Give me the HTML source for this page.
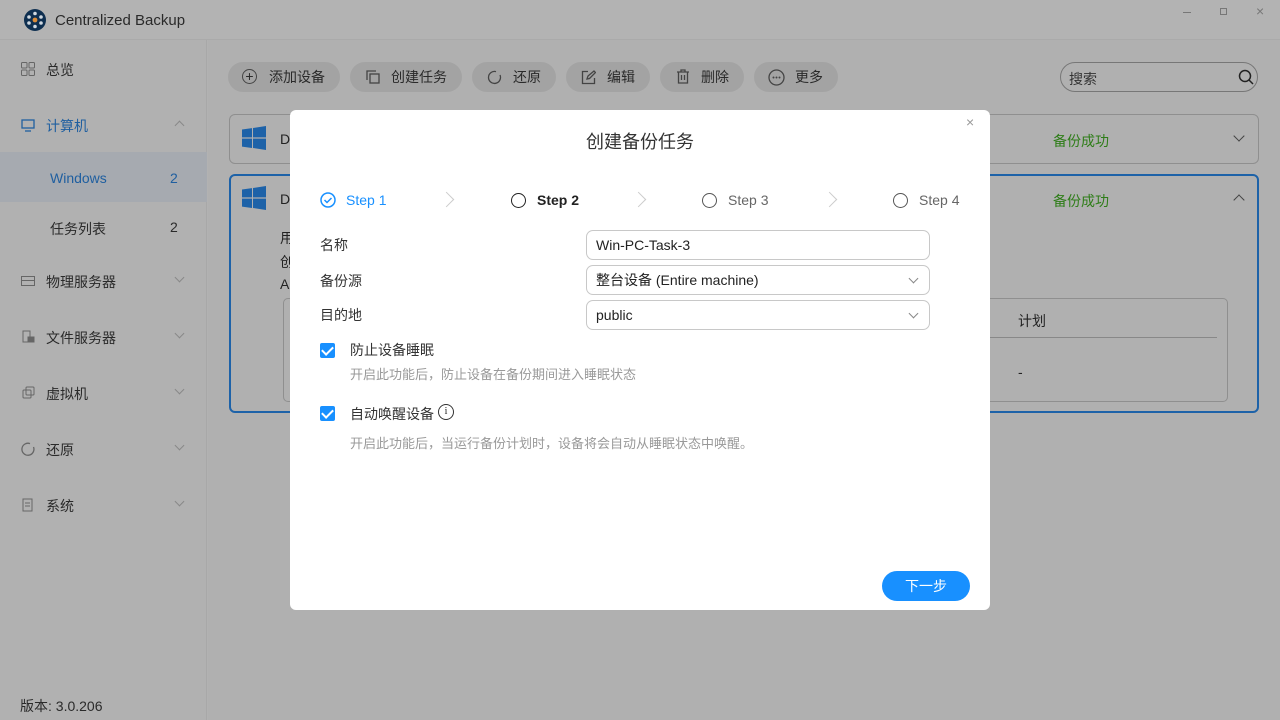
<!DOCTYPE html>
<html><head><meta charset="utf-8"><style>
*{box-sizing:border-box;margin:0;padding:0}
body{width:1280px;height:720px;overflow:hidden;background:#b2b2b2;font-family:"Liberation Sans","Noto Sans CJK SC",sans-serif;color:#222;position:relative;font-size:14px}
.abs{position:absolute}
.title{left:0;top:0;width:1280px;height:40px;background:#b3b3b3;border-bottom:1px solid #aaa}
.side{left:0;top:40px;width:207px;height:680px;background:#b1b1b1;border-right:1px solid #a8a8a8}
.main{left:208px;top:40px;width:1072px;height:680px;background:#b0b0b0}
.nav{position:absolute;left:20px;font-size:14px;color:#2a2a2a}
.chev{position:absolute;left:176px;width:7px;height:7px;border-right:1px solid #888;border-bottom:1px solid #888;transform:rotate(45deg)}
.btn{position:absolute;top:62px;height:30px;border-radius:15px;background:#a3a3a3;font-size:14px;line-height:30px;color:#2a2a2a}
.card{position:absolute;left:229px;width:1030px;border:1px solid #8f8f8f;border-radius:6px}
.win{position:absolute;width:24px;height:24px}
.green{position:absolute;left:1053px;color:#2e7d18;font-size:14px}
.modal{left:290px;top:110px;width:700px;height:500px;background:#fff;border-radius:6px}
.lab{position:absolute;left:30px;font-size:14px;color:#333}
.inp{position:absolute;left:296px;width:344px;height:30px;border:1px solid #c8c8c8;border-radius:7px;padding-left:9px;line-height:28px;font-size:14px;color:#222}
.dd{position:absolute;right:12px;top:9px;width:7px;height:7px;border-right:1px solid #888;border-bottom:1px solid #888;transform:rotate(45deg)}
.cb{position:absolute;left:30px;width:15px;height:15px;background:#1890ff;border-radius:2px}
.cb:after{content:"";position:absolute;left:4px;top:1px;width:5px;height:9px;border-right:2px solid #fff;border-bottom:2px solid #fff;transform:rotate(45deg)}
.desc{position:absolute;left:60px;font-size:13px;color:#999}
.sarr{position:absolute;top:84px;width:11px;height:11px;border-right:1px solid #ccc;border-top:1px solid #ccc;transform:rotate(45deg)}
</style></head><body>
<div class="abs title"></div>
<svg class="abs" style="left:24px;top:9px" width="22" height="22" viewBox="0 0 22 22"><circle cx="11" cy="11" r="11" fill="#0e2f50"/><g fill="#cfd8e0"><circle cx="11" cy="4.5" r="1.8"/><circle cx="11" cy="17.5" r="1.8"/><circle cx="5" cy="8" r="1.8"/><circle cx="17" cy="8" r="1.8"/><circle cx="5" cy="14" r="1.8"/><circle cx="17" cy="14" r="1.8"/></g><circle cx="11" cy="11" r="2.4" fill="#d98c3a"/></svg>
<div class="abs" style="left:55px;top:12px;font-size:15px;color:#2a2a2a">Centralized Backup</div>
<div class="abs" style="left:1183px;top:12px;width:8px;border-top:1px solid #777"></div>
<div class="abs" style="left:1220px;top:8px;width:7px;height:7px;border:1px solid #777"></div>
<div class="abs" style="left:1256px;top:3px;font-size:14px;color:#777">×</div>
<div class="abs side"></div>
<div class="abs main"></div>
<svg class="abs" style="left:21px;top:62px" width="14" height="14" viewBox="0 0 14 14" fill="none" stroke="#666"><rect x=".5" y=".5" width="5.5" height="5.5" rx="1"/><rect x="8" y=".5" width="5.5" height="5.5" rx="1"/><rect x=".5" y="8" width="5.5" height="5.5" rx="1"/><rect x="8" y="8" width="5.5" height="5.5" rx="1"/></svg>
<div class="nav" style="left:46px;top:60px">总览</div>
<svg class="abs" style="left:21px;top:119px" width="14" height="13" viewBox="0 0 14 13" fill="none" stroke="#2060a0" stroke-width="1.3"><rect x="1" y="1" width="12" height="8"/><path d="M4 12h6"/></svg>
<div class="nav" style="left:46px;top:116px;color:#1f5fa0">计算机</div>
<div class="chev" style="top:122px;transform:rotate(225deg)"></div>
<div class="abs" style="left:0;top:152px;width:207px;height:50px;background:#a6aab0"></div>
<div class="nav" style="left:50px;top:170px;color:#1f5fa0">Windows</div>
<div class="nav" style="left:170px;top:170px;color:#1f5fa0">2</div>
<div class="nav" style="left:50px;top:219px">任务列表</div>
<div class="nav" style="left:170px;top:219px">2</div>
<svg class="abs" style="left:21px;top:276px" width="14" height="10"><rect x=".5" y=".5" width="13" height="9" fill="none" stroke="#666"/><rect x="1" y="4" width="12" height="1" fill="#666"/></svg>
<div class="nav" style="left:46px;top:272px">物理服务器</div><div class="chev" style="top:274px"></div>
<svg class="abs" style="left:22px;top:330px" width="13" height="13" fill="none" stroke="#666"><path d="M1 1h7v11H1z"/><rect x="6" y="7" width="6" height="5" fill="#666"/></svg>
<div class="nav" style="left:46px;top:328px">文件服务器</div><div class="chev" style="top:330px"></div>
<svg class="abs" style="left:22px;top:386px" width="13" height="13" fill="none" stroke="#666"><rect x="4" y="1" width="8" height="8" rx="1"/><rect x="1" y="4" width="8" height="8" rx="1"/></svg>
<div class="nav" style="left:46px;top:384px">虚拟机</div><div class="chev" style="top:386px"></div>
<svg class="abs" style="left:21px;top:442px" width="14" height="14" fill="none" stroke="#666" stroke-width="1.3"><path d="M9 1.6A6 6 0 1 0 12.5 5"/></svg>
<div class="nav" style="left:46px;top:440px">还原</div><div class="chev" style="top:442px"></div>
<svg class="abs" style="left:22px;top:498px" width="13" height="14" fill="none" stroke="#666"><path d="M1 1h9v12H1z M3 5h5 M3 8h5"/></svg>
<div class="nav" style="left:46px;top:496px">系统</div><div class="chev" style="top:498px"></div>
<div class="abs" style="left:20px;top:696px;font-size:14px;color:#2a2a2a">版本: 3.0.206</div>
<div class="btn" style="left:228px;width:112px"><span style="position:absolute;left:14px;top:7px;width:15px;height:15px;border:1.3px solid #444;border-radius:50%;text-align:center;line-height:12px;font-size:14px">+</span><span style="position:absolute;left:41px">添加设备</span></div>
<div class="btn" style="left:350px;width:112px"><svg style="position:absolute;left:16px;top:8px" width="14" height="14" fill="none" stroke="#444" stroke-width="1.3"><path d="M1 10V1h9"/><rect x="4" y="4" width="9" height="9"/></svg><span style="position:absolute;left:41px">创建任务</span></div>
<div class="btn" style="left:472px;width:84px"><svg style="position:absolute;left:15px;top:8px" width="15" height="15" fill="none" stroke="#444" stroke-width="1.3"><path d="M9 1.6A6 6 0 1 0 13 5"/></svg><span style="position:absolute;left:41px">还原</span></div>
<div class="btn" style="left:566px;width:84px"><svg style="position:absolute;left:15px;top:8px" width="15" height="15" fill="none" stroke="#444" stroke-width="1.3"><path d="M7 1.5H1.5v12h12V8 M6 9l1-3 6-5 1.5 1.5-6 6z"/></svg><span style="position:absolute;left:41px">编辑</span></div>
<div class="btn" style="left:660px;width:84px"><svg style="position:absolute;left:16px;top:7px" width="14" height="15" fill="none" stroke="#444" stroke-width="1.3"><path d="M1 3h12 M5 3V1h4v2 M2.5 3v11h9V3 M5.5 6v5 M8.5 6v5"/></svg><span style="position:absolute;left:41px">删除</span></div>
<div class="btn" style="left:754px;width:84px"><svg style="position:absolute;left:14px;top:7px" width="17" height="17" fill="none" stroke="#444" stroke-width="1.3"><circle cx="8.5" cy="8.5" r="7.5"/><g fill="#444" stroke="none"><circle cx="5.5" cy="8.5" r="1"/><circle cx="8.5" cy="8.5" r="1"/><circle cx="11.5" cy="8.5" r="1"/></g></svg><span style="position:absolute;left:41px">更多</span></div>
<div class="abs" style="left:1060px;top:62px;width:198px;height:30px;border:1px solid #777;border-radius:15px"><span style="position:absolute;left:8px;top:6px;color:#333">搜索</span><svg style="position:absolute;left:177px;top:6px" width="16" height="16" fill="none" stroke="#222" stroke-width="1.5"><circle cx="7" cy="7" r="5.5"/><path d="M11 11l4 4"/></svg></div>
<div class="card" style="top:114px;height:50px"></div>
<div class="card" style="top:174px;height:239px;border:2px solid #1d62a8"></div>
<svg class="win" style="left:242px;top:126px" viewBox="0 0 24 24" fill="#1d62a8"><path d="M0 3.5l10-1.4V11.4H0z M11 2l13-2v11.4H11z M0 12.6h10v9.4L0 20.6z M11 12.6h13V24l-13-2z"/></svg>
<svg class="win" style="left:242px;top:186px" viewBox="0 0 24 24" fill="#1d62a8"><path d="M0 3.5l10-1.4V11.4H0z M11 2l13-2v11.4H11z M0 12.6h10v9.4L0 20.6z M11 12.6h13V24l-13-2z"/></svg>
<div class="abs" style="left:280px;top:131px">D</div><div class="abs" style="left:280px;top:191px">D</div>
<div class="abs" style="left:280px;top:228px">用</div><div class="abs" style="left:280px;top:252px">创</div><div class="abs" style="left:280px;top:276px">A</div>
<div class="green" style="top:131px">备份成功</div><div class="green" style="top:191px">备份成功</div>
<div class="abs" style="left:1235px;top:132px;width:8px;height:8px;border-right:1px solid #444;border-bottom:1px solid #444;transform:rotate(45deg)"></div>
<div class="abs" style="left:1235px;top:196px;width:8px;height:8px;border-left:1px solid #444;border-top:1px solid #444;transform:rotate(45deg)"></div>
<div class="abs" style="left:283px;top:298px;width:945px;height:104px;border:1px solid #8f8f8f;border-radius:5px"></div>
<div class="abs" style="left:990px;top:337px;width:227px;border-top:1px solid #888"></div>
<div class="abs" style="left:1018px;top:311px">计划</div>
<div class="abs" style="left:1018px;top:364px">-</div>
<div class="abs modal">
<div class="abs" style="left:0;top:18px;width:700px;text-align:center;font-size:18px;color:#333">创建备份任务</div>
<div class="abs" style="left:676px;top:4px;color:#999;font-size:14px">×</div>
<svg class="abs" style="left:30px;top:82px" width="16" height="16" fill="none" stroke="#1890ff" stroke-width="1.5"><circle cx="8" cy="8" r="7"/><path d="M4.5 8l2.5 2.5 4.5-4.5"/></svg>
<div class="abs" style="left:56px;top:82px;color:#1890ff">Step 1</div>
<div class="sarr" style="left:151px"></div>
<div class="abs" style="left:221px;top:83px;width:15px;height:15px;border:1.8px solid #222;border-radius:50%"></div>
<div class="abs" style="left:247px;top:82px;font-weight:bold;color:#222">Step 2</div>
<div class="sarr" style="left:343px"></div>
<div class="abs" style="left:412px;top:83px;width:15px;height:15px;border:1.5px solid #555;border-radius:50%"></div>
<div class="abs" style="left:438px;top:82px;color:#666">Step 3</div>
<div class="sarr" style="left:534px"></div>
<div class="abs" style="left:603px;top:83px;width:15px;height:15px;border:1.5px solid #555;border-radius:50%"></div>
<div class="abs" style="left:629px;top:82px;color:#666">Step 4</div>
<div class="lab" style="top:125px">名称</div>
<div class="lab" style="top:161px">备份源</div>
<div class="lab" style="top:195px">目的地</div>
<div class="inp" style="top:120px">Win-PC-Task-3</div>
<div class="inp" style="top:155px">整台设备 (Entire machine)<div class="dd"></div></div>
<div class="inp" style="top:190px">public<div class="dd"></div></div>
<div class="cb" style="top:233px"></div>
<div class="abs" style="left:60px;top:230px;color:#333">防止设备睡眠</div>
<div class="desc" style="top:254px">开启此功能后，防止设备在备份期间进入睡眠状态</div>
<div class="cb" style="top:296px"></div>
<div class="abs" style="left:60px;top:294px;color:#333">自动唤醒设备</div>
<div class="abs" style="left:148px;top:294px;width:16px;height:16px;border:1px solid #333;border-radius:50%;font-size:10px;text-align:center;line-height:14px;font-family:'Liberation Serif',serif">i</div>
<div class="desc" style="top:323px">开启此功能后，当运行备份计划时，设备将会自动从睡眠状态中唤醒。</div>
<div class="abs" style="left:592px;top:461px;width:88px;height:30px;border-radius:15px;background:#1890ff;color:#fff;text-align:center;line-height:30px">下一步</div>
</div>
</body></html>
